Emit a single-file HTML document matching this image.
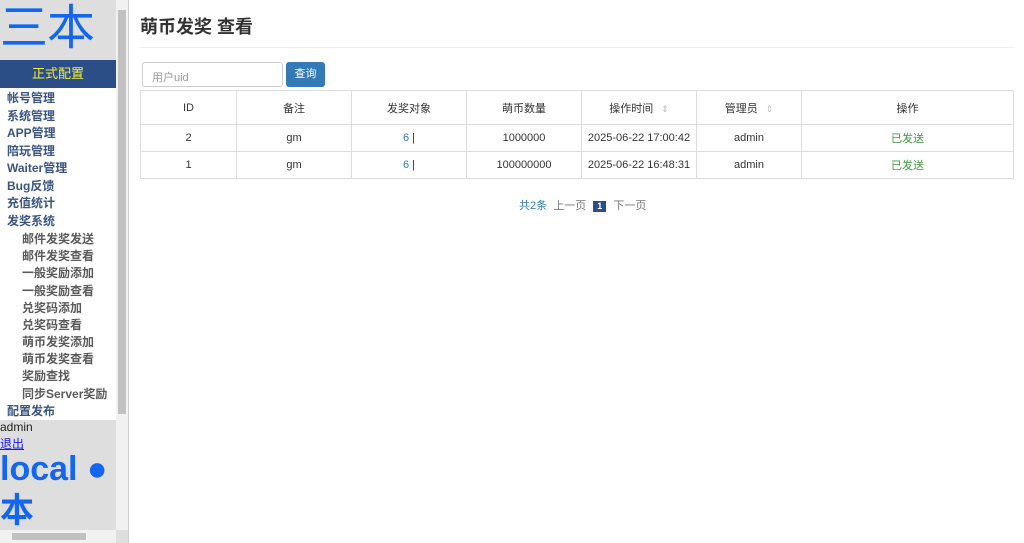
<!DOCTYPE html>
<html><head><meta charset="utf-8"><style>
*{margin:0;padding:0;box-sizing:border-box}
body{width:1024px;height:543px;overflow:hidden;font-family:"Liberation Sans","Noto Sans CJK SC",sans-serif;background:#fff;position:relative}
#side{position:absolute;left:0;top:0;width:129px;height:543px;background:#dedede;border-right:1px solid #ccc;overflow:hidden}
#logo{position:absolute;left:0;top:-3px;font-size:48px;color:#1366f0;line-height:64px;letter-spacing:-1px}
#banner{position:absolute;left:0;top:60px;width:116px;height:28px;background:#2c4e86;color:#f2ee3a;font-size:13px;text-align:center;line-height:28px}
#menu{position:absolute;left:0;top:88px;width:116px;height:332px;background:#fff}
.m{position:absolute;left:7px;font-size:12px;font-weight:bold;color:#3a5580;line-height:14px}
.s{left:22px;color:#5a5a5a}
#vs{position:absolute;left:116px;top:0;width:12px;height:530px;background:#f1f1f1}
#vs .th{position:absolute;left:2px;top:10px;width:8px;height:404px;background:#c1c1c1}
#hs{position:absolute;left:0;top:530px;width:116px;height:13px;background:#f1f1f1}
#hs .th{position:absolute;left:12px;top:3px;width:74px;height:7px;background:#c1c1c1}
#main{position:absolute;left:140px;top:0;width:874px}
h1{position:absolute;left:0;top:13px;font-size:18px;font-weight:bold;color:#333}
#hr{position:absolute;left:0;top:47px;width:874px;border-top:1px solid #eee}
#inp{position:absolute;left:2px;top:62px;width:141px;height:25px;border:1px solid #ccc;border-radius:3px;font-size:11px;color:#999;padding:6px 9px}
#btn{position:absolute;left:146px;top:62px;width:39px;height:25px;background:#337ab7;border-radius:3px;color:#fff;font-size:11px;text-align:center;line-height:25px}
table{position:absolute;left:0;top:90px;width:874px;border-collapse:collapse;font-size:11px;color:#333;table-layout:fixed}
td,th{border:1px solid #ddd;text-align:center;font-weight:normal}
th{height:34px}td{height:27px}
.a{color:#337ab7}.g{color:#3c9a3c}
.sort{color:#bbb;font-size:9px;margin-left:8px}
#pg{position:absolute;left:379px;top:197px;font-size:11px;color:#777}
#pg span.b{color:#337ab7}
#pg span.n{display:inline-block;background:#2c4e86;color:#fff;font-weight:bold;width:13px;height:11px;line-height:11px;text-align:center;font-size:9px;margin:0 4px}
</style></head><body>
<div id="side">
<div id="logo">三本</div>
<div id="banner">正式配置</div>
<div id="menu">
<div class="m" style="top:3px">帐号管理</div>
<div class="m" style="top:21px">系统管理</div>
<div class="m" style="top:38px">APP管理</div>
<div class="m" style="top:56px">陪玩管理</div>
<div class="m" style="top:73px">Waiter管理</div>
<div class="m" style="top:91px">Bug反馈</div>
<div class="m" style="top:108px">充值统计</div>
<div class="m" style="top:126px">发奖系统</div>
<div class="m s" style="top:144px">邮件发奖发送</div>
<div class="m s" style="top:161px">邮件发奖查看</div>
<div class="m s" style="top:178px">一般奖励添加</div>
<div class="m s" style="top:196px">一般奖励查看</div>
<div class="m s" style="top:213px">兑奖码添加</div>
<div class="m s" style="top:230px">兑奖码查看</div>
<div class="m s" style="top:247px">萌币发奖添加</div>
<div class="m s" style="top:264px">萌币发奖查看</div>
<div class="m s" style="top:281px">奖励查找</div>
<div class="m s" style="top:299px">同步Server奖励</div>
<div class="m" style="top:316px">配置发布</div>
</div>
<div style="position:absolute;left:0;top:420px;font-size:12px;color:#222">admin</div>
<div style="position:absolute;left:0;top:435px;font-size:12px;color:#1a1ae0;text-decoration:underline">退出</div>
<div style="position:absolute;left:0;top:448px;font-size:34px;font-weight:bold;color:#1366f0;line-height:42px;white-space:nowrap">local ●<br>本</div>
<div id="vs"><div class="th"></div></div>
<div id="hs"><div class="th"></div></div>
</div>
<div id="main">
<h1>萌币发奖 查看</h1>
<div id="hr"></div>
<div id="inp">用户uid</div>
<div id="btn">查询</div>
<table>
<tr><th style="width:96px">ID</th><th style="width:115px">备注</th><th style="width:115px">发奖对象</th><th style="width:115px">萌币数量</th><th style="width:115px">操作时间<span class="sort">⇕</span></th><th style="width:105px">管理员<span class="sort">⇕</span></th><th>操作</th></tr>
<tr><td>2</td><td>gm</td><td><span class="a">6</span> |</td><td>1000000</td><td>2025-06-22 17:00:42</td><td>admin</td><td class="g">已发送</td></tr>
<tr><td>1</td><td>gm</td><td><span class="a">6</span> |</td><td>100000000</td><td>2025-06-22 16:48:31</td><td>admin</td><td class="g">已发送</td></tr>
</table>
<div id="pg"><span class="b">共2条</span> &nbsp;上一页 <span class="n">1</span> 下一页</div>
</div>
</body></html>
